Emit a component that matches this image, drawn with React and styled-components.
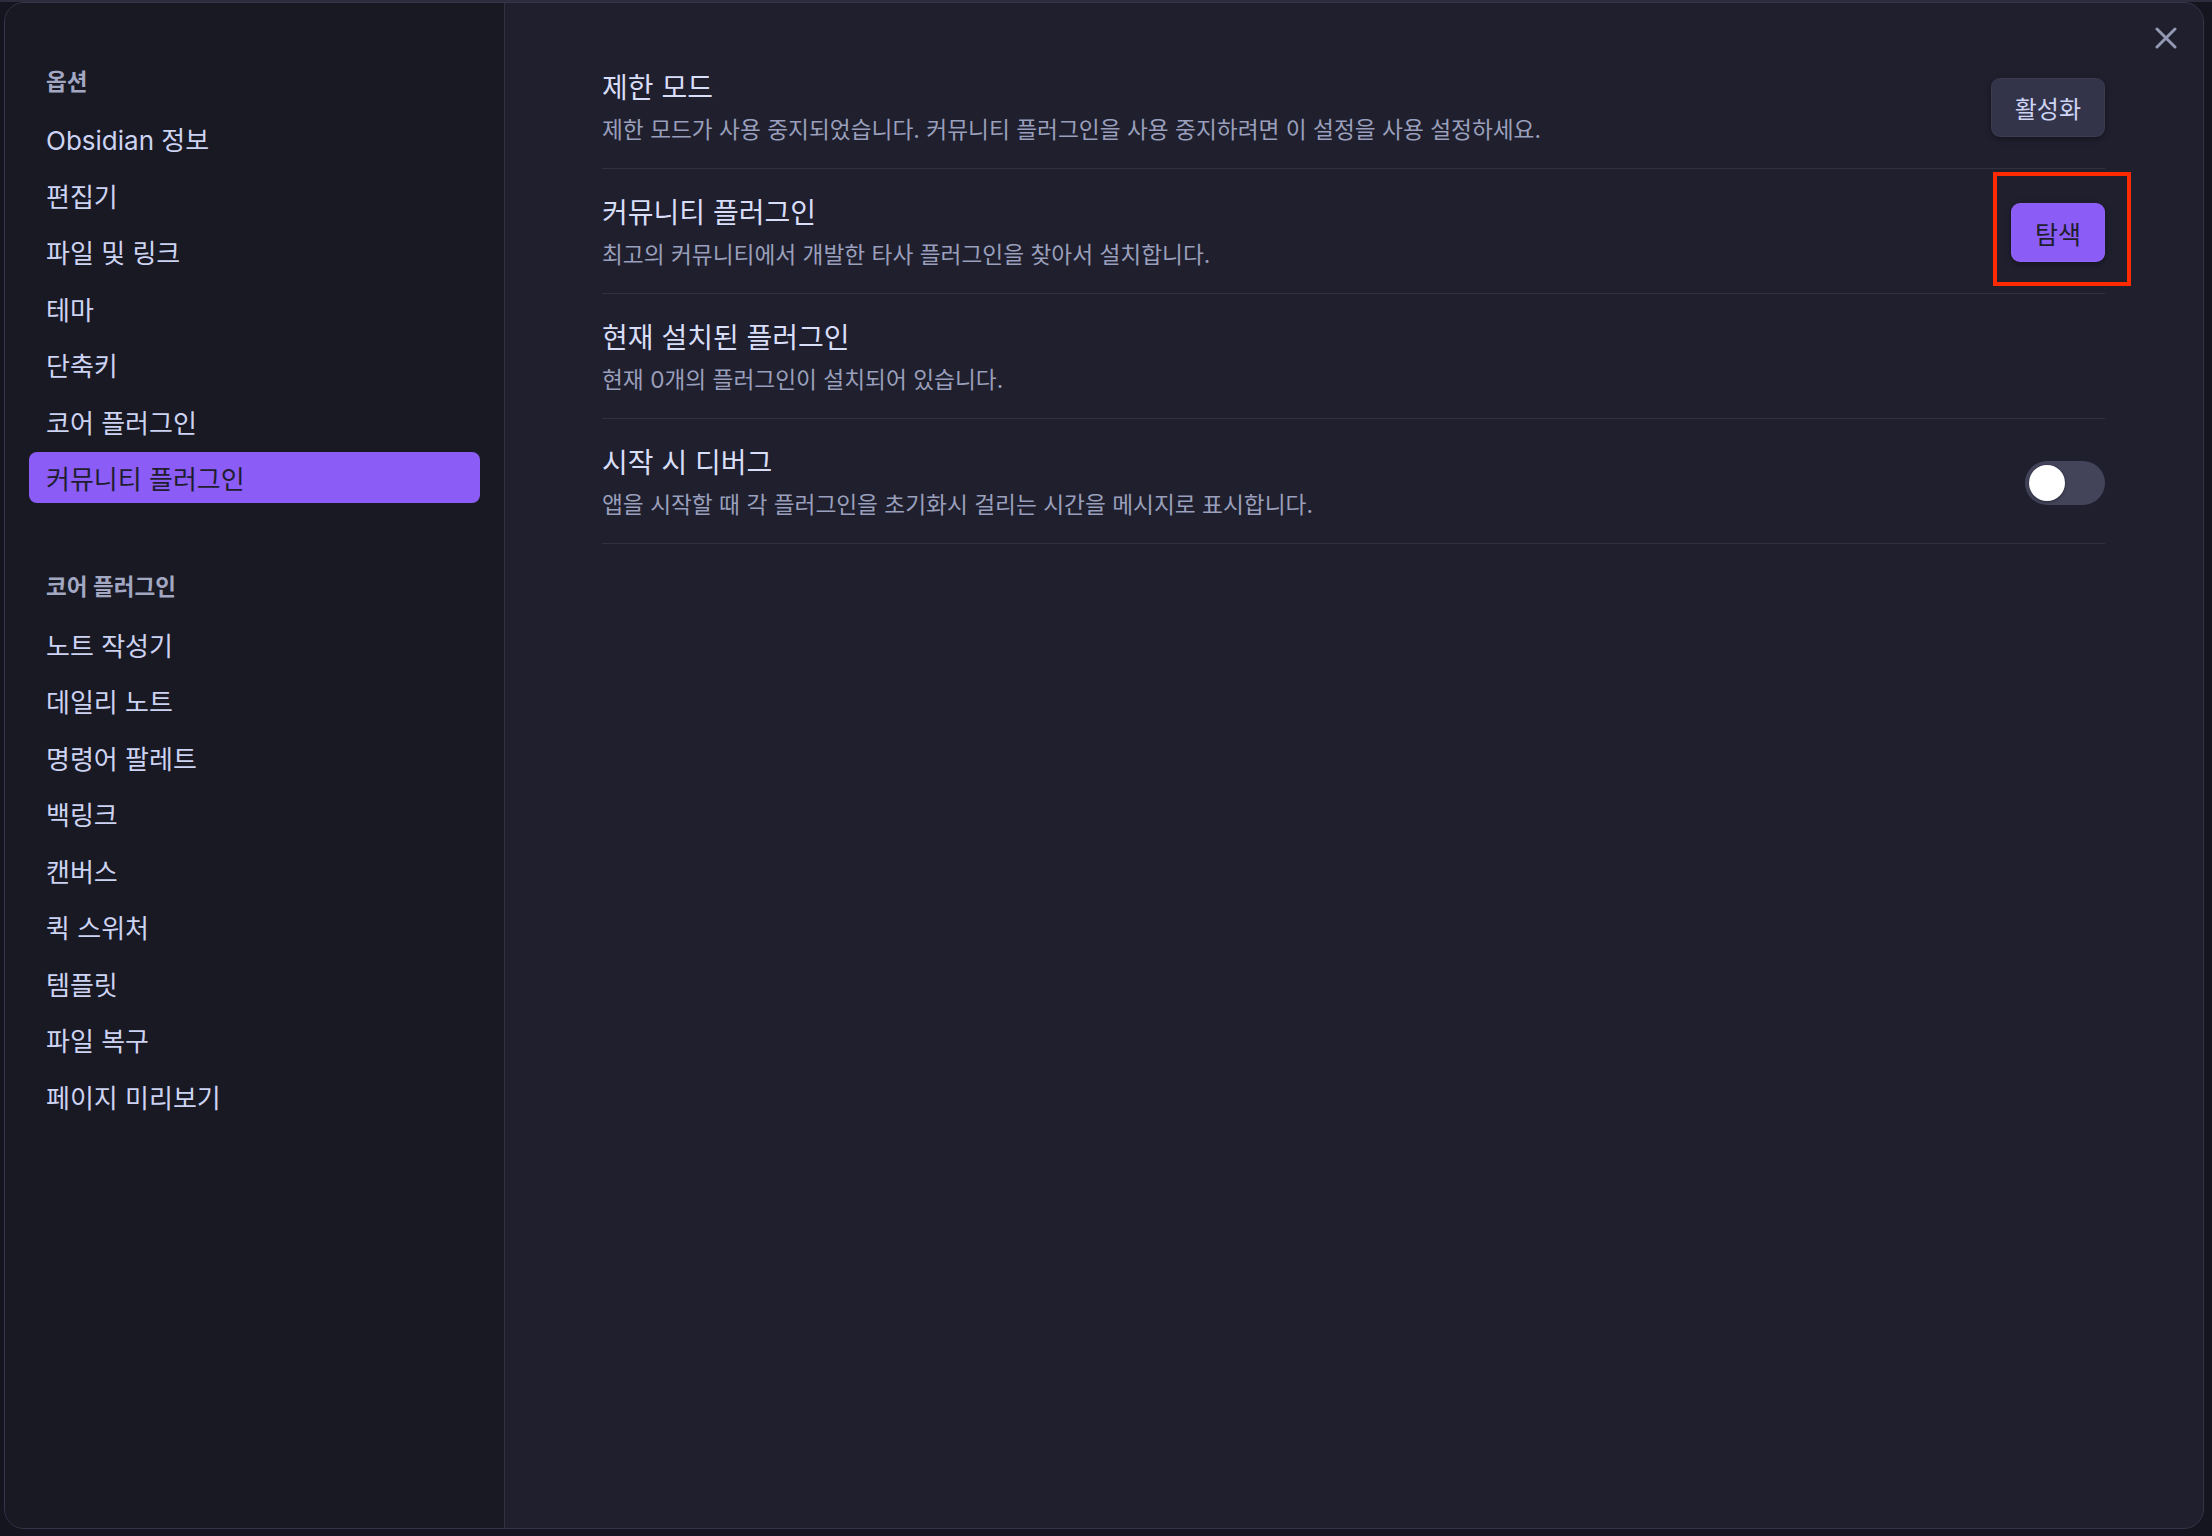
import React, { useState } from "react";
import styled, { createGlobalStyle } from "styled-components";

const GlobalStyle = createGlobalStyle`
  html, body {
    margin: 0;
    padding: 0;
    background: #15151f;
    font-family: Inter, "Noto Sans CJK KR", sans-serif;
  }
  * {
    box-sizing: border-box;
  }
`;

const NAV_OPTIONS = [
  "Obsidian 정보",
  "편집기",
  "파일 및 링크",
  "테마",
  "단축키",
  "코어 플러그인",
  "커뮤니티 플러그인"
];

const NAV_CORE = [
  "노트 작성기",
  "데일리 노트",
  "명령어 팔레트",
  "백링크",
  "캔버스",
  "퀵 스위처",
  "템플릿",
  "파일 복구",
  "페이지 미리보기"
];

export default function App() {
  const [debugOnStart, setDebugOnStart] = useState(false);
  const active = "커뮤니티 플러그인";

  return (
    <>
      <GlobalStyle />
      <Screen>
        <Modal>
          <Sidebar>
            <NavGroup>
              <GroupTitle>옵션</GroupTitle>
              {NAV_OPTIONS.map(label => (
                <NavItem key={label} $active={label === active}>
                  {label}
                </NavItem>
              ))}
            </NavGroup>
            <NavGroup>
              <GroupTitle>코어 플러그인</GroupTitle>
              {NAV_CORE.map(label => (
                <NavItem key={label}>{label}</NavItem>
              ))}
            </NavGroup>
          </Sidebar>

          <Content>
            <SettingItem>
              <SettingInfo>
                <SettingName>제한 모드</SettingName>
                <SettingDesc>
                  제한 모드가 사용 중지되었습니다. 커뮤니티 플러그인을 사용 중지하려면 이 설정을 사용 설정하세요.
                </SettingDesc>
              </SettingInfo>
              <Button>활성화</Button>
            </SettingItem>

            <SettingItem>
              <SettingInfo>
                <SettingName>커뮤니티 플러그인</SettingName>
                <SettingDesc>
                  최고의 커뮤니티에서 개발한 타사 플러그인을 찾아서 설치합니다.
                </SettingDesc>
              </SettingInfo>
              <Highlighted>
                <Button $cta>탐색</Button>
                <RedBox />
              </Highlighted>
            </SettingItem>

            <SettingItem>
              <SettingInfo>
                <SettingName>현재 설치된 플러그인</SettingName>
                <SettingDesc>현재 0개의 플러그인이 설치되어 있습니다.</SettingDesc>
              </SettingInfo>
            </SettingItem>

            <SettingItem>
              <SettingInfo>
                <SettingName>시작 시 디버그</SettingName>
                <SettingDesc>
                  앱을 시작할 때 각 플러그인을 초기화시 걸리는 시간을 메시지로 표시합니다.
                </SettingDesc>
              </SettingInfo>
              <Toggle
                $on={debugOnStart}
                onClick={() => setDebugOnStart(v => !v)}
              >
                <Knob $on={debugOnStart} />
              </Toggle>
            </SettingItem>
          </Content>

          <CloseButton aria-label="닫기">
            <svg width="22" height="22" viewBox="0 0 22 22">
              <path
                d="M2 2 L20 20 M20 2 L2 20"
                stroke="#9399b2"
                strokeWidth="3"
                strokeLinecap="round"
              />
            </svg>
          </CloseButton>
        </Modal>
      </Screen>
    </>
  );
}

const Screen = styled.div`
  width: 2212px;
  height: 1536px;
  padding: 1px 0 0 4px;
  border-top: 2px solid #2c2c3c;
`;

const Modal = styled.div`
  position: relative;
  display: flex;
  width: 2200px;
  height: 1527px;
  margin-top: -1px;
  border: 1.5px solid #34344a;
  border-radius: 20px;
  overflow: hidden;
  background: #1f1f2e;
`;

const Sidebar = styled.nav`
  flex: 0 0 500px;
  display: flex;
  flex-direction: column;
  gap: 69px;
  padding: 63.5px 24px 0 24px;
  background: #191924;
  border-right: 1.5px solid #30303f;
`;

const NavGroup = styled.div`
  display: flex;
  flex-direction: column;
  gap: 5.5px;
`;

const GroupTitle = styled.div`
  padding: 0 17px;
  height: 30px;
  line-height: 30px;
  margin-bottom: 11px;
  font-size: 22.5px;
  font-weight: 600;
  color: #a2a7c2;
`;

const NavItem = styled.div`
  height: 51px;
  display: flex;
  align-items: center;
  padding: 0 17px;
  border-radius: 8px;
  font-size: 26px;
  color: ${p => (p.$active ? "#1e1e2e" : "#cdd3f2")};
  background: ${p => (p.$active ? "#8b5cf6" : "transparent")};
`;

const Content = styled.main`
  flex: 1;
  padding: 40.5px 98px 0 97px;
`;

const SettingItem = styled.div`
  display: flex;
  align-items: center;
  gap: 24px;
  padding: 27px 0 23px;
  border-bottom: 1.5px solid #30303f;
`;

const SettingInfo = styled.div`
  flex: 1;
  display: flex;
  flex-direction: column;
  gap: 10px;
`;

const SettingName = styled.div`
  font-size: 28px;
  line-height: 34px;
  color: #d8ddf8;
`;

const SettingDesc = styled.div`
  font-size: 22.7px;
  line-height: 30px;
  color: #9a9fbb;
`;

const Button = styled.button`
  height: 59px;
  padding: 0 ${p => (p.$cta ? "24px" : "24px")};
  border: none;
  border-radius: 9px;
  font-family: inherit;
  font-size: ${p => (p.$cta ? "25px" : "24px")};
  color: ${p => (p.$cta ? "#1e1e2e" : "#cdd3f2")};
  background: ${p => (p.$cta ? "#8b5cf6" : "#33334a")};
  box-shadow: 0 2px 6px rgba(0, 0, 0, 0.35), inset 0 0 0 1px rgba(255, 255, 255, 0.04);
`;

const Highlighted = styled.div`
  position: relative;
  display: flex;
`;

const RedBox = styled.div`
  position: absolute;
  left: -18px;
  right: -26px;
  top: -31px;
  bottom: -24px;
  border: 4px solid #ff2a00;
  pointer-events: none;
`;

const Toggle = styled.div`
  position: relative;
  width: 80px;
  height: 44px;
  border-radius: 22px;
  background: ${p => (p.$on ? "#8b5cf6" : "#43435a")};
  cursor: pointer;
`;

const Knob = styled.div`
  position: absolute;
  top: 4px;
  left: ${p => (p.$on ? "40px" : "4px")};
  width: 36px;
  height: 36px;
  border-radius: 50%;
  background: #ffffff;
  box-shadow: 0 1px 3px rgba(0, 0, 0, 0.4);
`;

const CloseButton = styled.button`
  position: absolute;
  top: 13px;
  right: 15px;
  width: 44px;
  height: 44px;
  display: flex;
  align-items: center;
  justify-content: center;
  padding: 0;
  border: none;
  background: transparent;
  cursor: pointer;
`;
